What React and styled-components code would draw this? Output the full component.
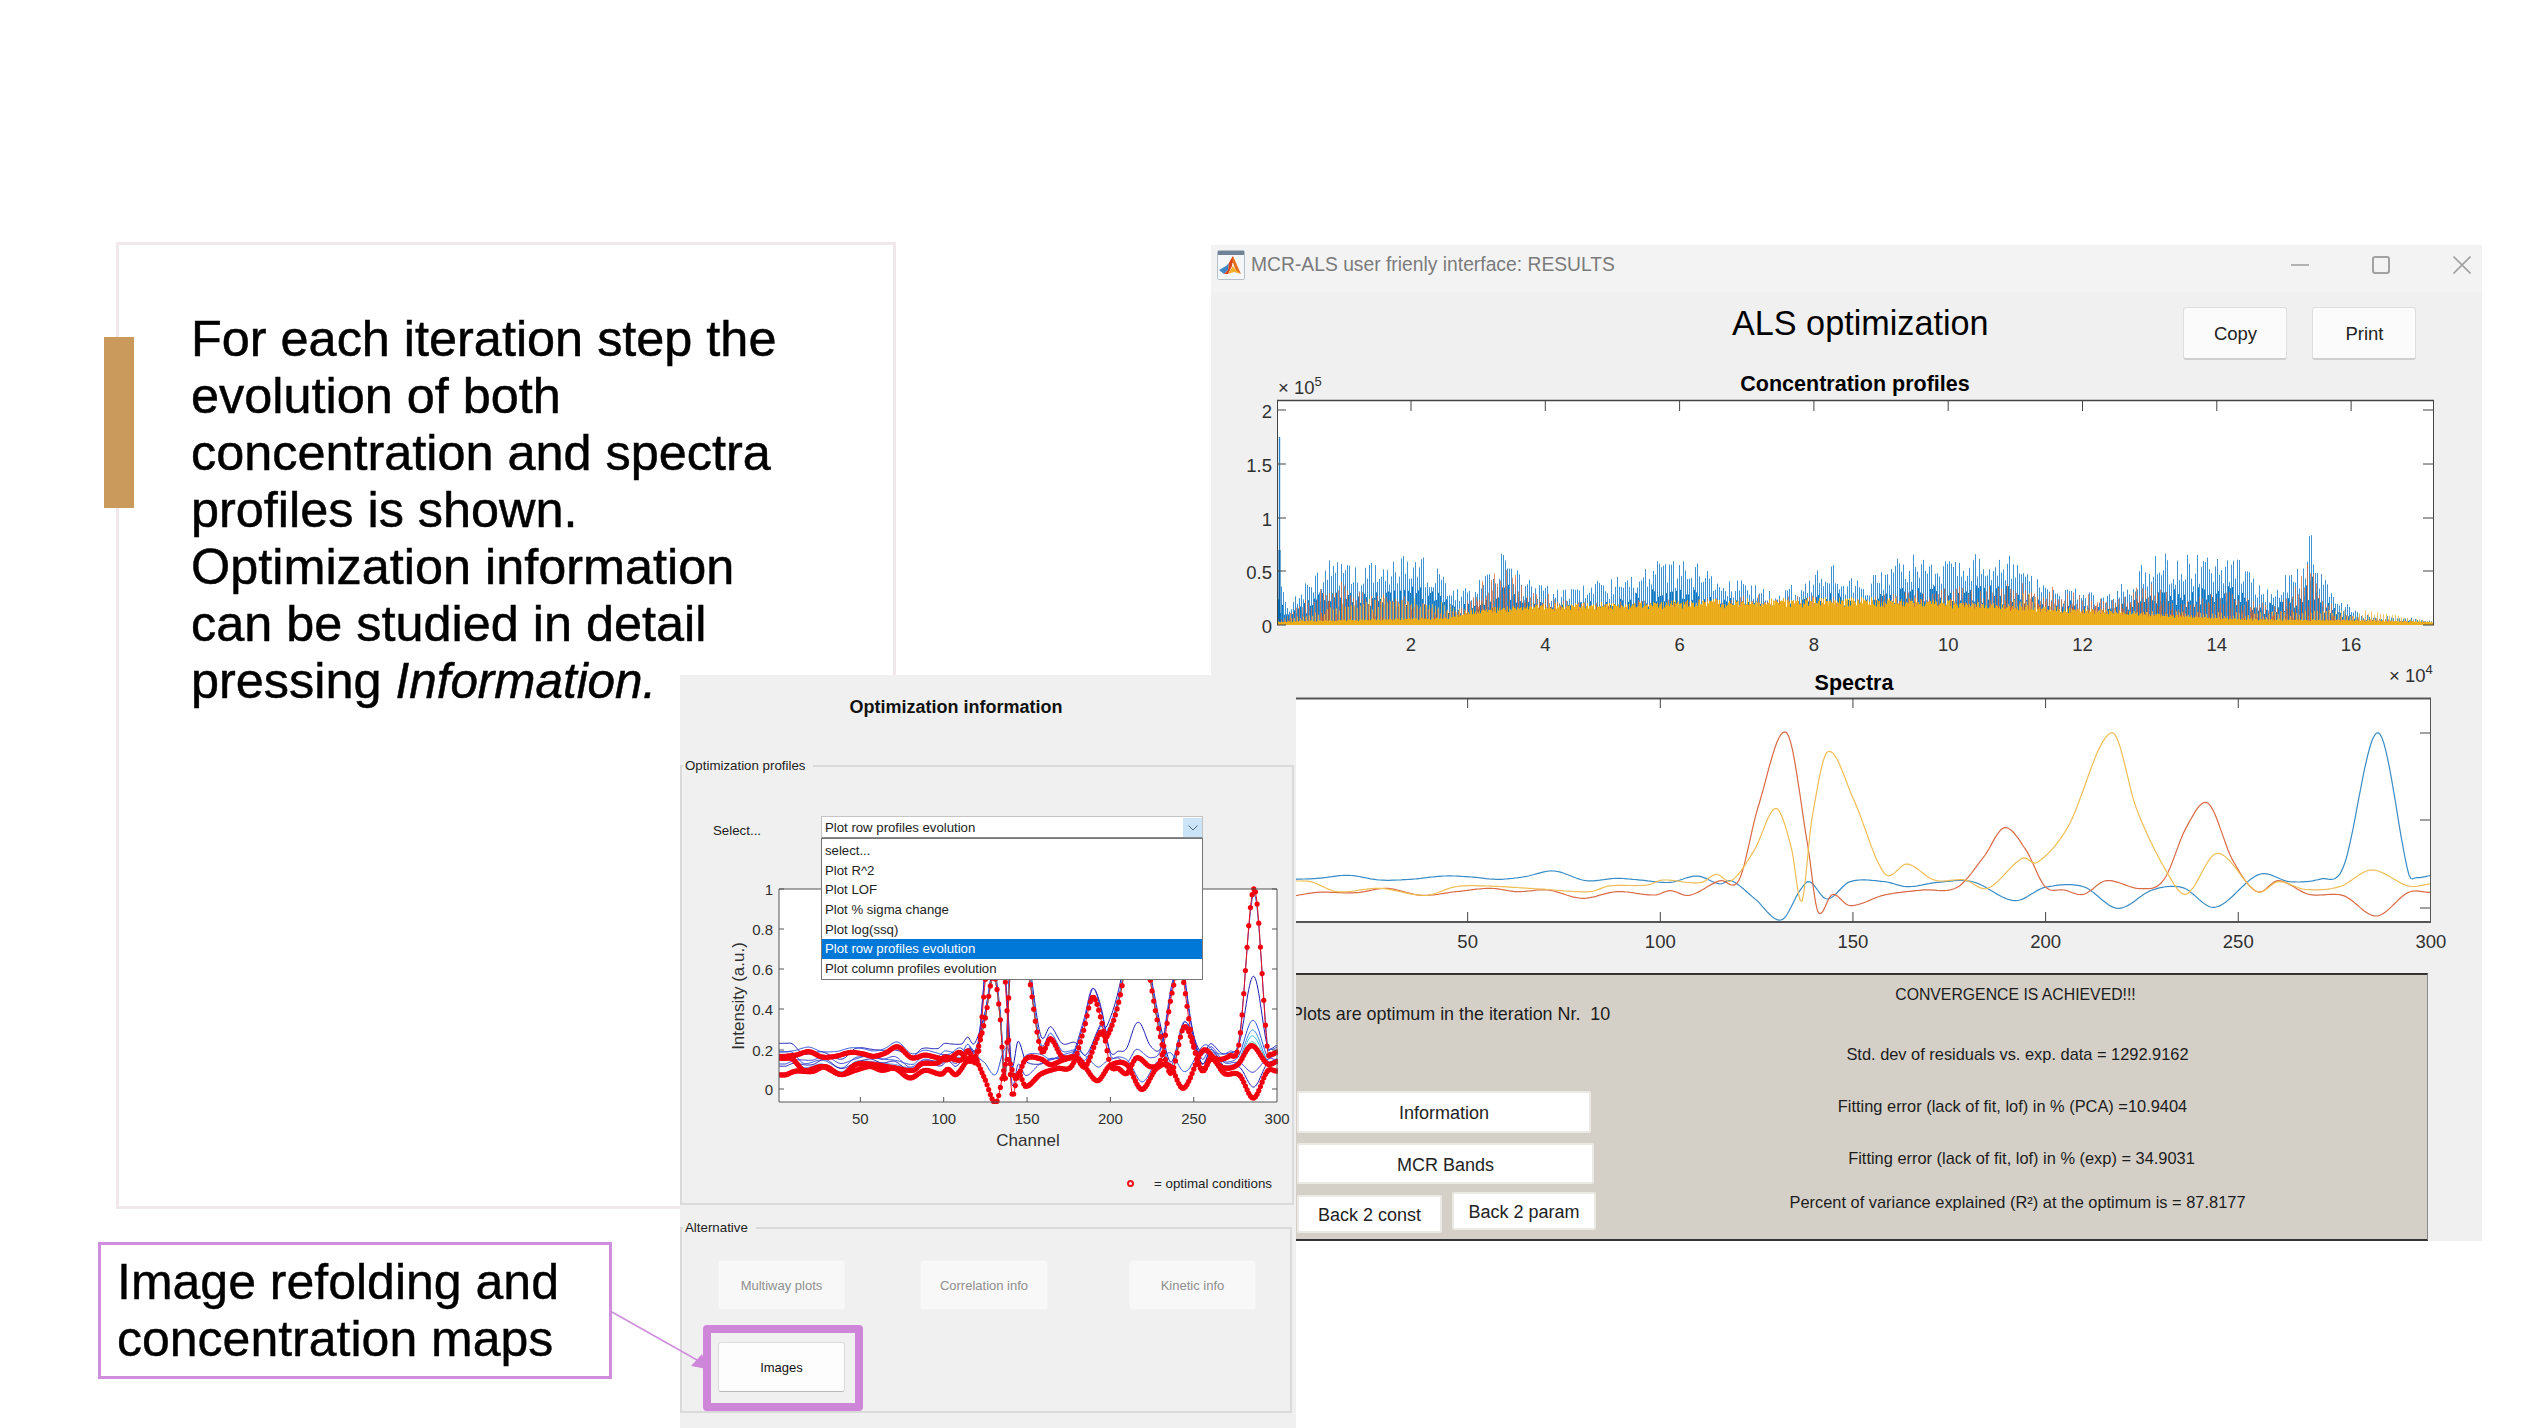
import React from "react";
import styled, { createGlobalStyle } from "styled-components";

const GlobalStyle = createGlobalStyle`
  html, body { margin: 0; padding: 0; background: #fff; }
  body { font-family: "Liberation Sans", Arial, sans-serif; color: #111; }
  * { box-sizing: border-box; }
`;

/* ---------- traced data, in pixels of the reference crop ---------- */

const BLUE = [[20,658],[50,655],[90,646],[130,660],[170,658],[215,648],[250,651],[285,658],[320,650],[358,633],[400,662],[440,655],[470,660],[510,667],[545,648],[575,672],[590,662],[620,715],[655,780],[680,690],[692,665],[715,717],[745,665],[790,665],[820,680],[860,667],[905,665],[960,722],[1000,682],[1050,680],[1095,745],[1140,690],[1180,683],[1222,742],[1280,643],[1320,665],[1360,657],[1390,620],[1435,218],[1475,640],[1485,653],[1503,647]];
const RED = [[20,707],[50,697],[100,698],[140,685],[185,706],[230,695],[275,685],[310,695],[350,690],[395,715],[440,695],[490,705],[510,692],[535,706],[575,662],[600,660],[625,440],[662,218],[690,560],[703,755],[722,703],[745,737],[790,705],[840,690],[885,682],[920,590],[947,503],[975,570],[1000,680],[1025,690],[1050,703],[1080,662],[1125,686],[1155,660],[1185,500],[1213,430],[1245,600],[1277,695],[1305,662],[1345,703],[1390,707],[1433,768],[1475,697],[1503,697]];
const YELLOW = [[20,663],[40,665],[75,695],[130,685],[190,706],[230,680],[270,678],[340,687],[405,695],[430,678],[480,675],[500,660],[550,668],[570,643],[590,662],[620,570],[648,445],[668,560],[682,725],[695,480],[716,275],[750,420],[790,640],[820,612],[855,660],[895,660],[925,685],[970,595],[990,607],[1030,500],[1087,218],[1120,450],[1160,640],[1185,702],[1225,580],[1277,695],[1305,665],[1340,688],[1385,680],[1427,630],[1475,678],[1503,672]];

const toSeries = (pts) =>
  pts.map(([zx, zy]) => [(1280 + zx / 1.307 - 1275) / 3.853, (744 - zy) / 525]);

const seriesBlue = toSeries(BLUE);
const seriesRed = toSeries(RED);
const seriesYellow = toSeries(YELLOW);

// cubic hermite through the traced points
const sample = (s, x) => {
  if (x <= s[0][0]) return s[0][1];
  if (x >= s[s.length - 1][0]) return s[s.length - 1][1];
  let i = 0;
  while (s[i + 1][0] < x) i++;
  const slope = (a, b) => (s[b][1] - s[a][1]) / (s[b][0] - s[a][0]);
  const m0 = i > 0 ? slope(i - 1, i + 1) : slope(i, i + 1);
  const m1 = i + 2 < s.length ? slope(i, i + 2) : slope(i, i + 1);
  const h = s[i + 1][0] - s[i][0];
  const t = (x - s[i][0]) / h;
  const t2 = t * t;
  const t3 = t2 * t;
  return (
    (2 * t3 - 3 * t2 + 1) * s[i][1] +
    (t3 - 2 * t2 + t) * h * m0 +
    (-2 * t3 + 3 * t2) * s[i + 1][1] +
    (t3 - t2) * h * m1
  );
};

const linePath = (fn, px, py, from = 1, to = 300, step = 0.5) => {
  let d = "";
  for (let c = from; c <= to; c += step) {
    d += `${d ? "L" : "M"}${px(c).toFixed(1)} ${py(fn(c)).toFixed(1)}`;
  }
  return d;
};

const ENV_BLUE = [[93,.5],[105,.18],[130,.42],[160,.67],[190,.56],[245,.67],[280,.62],[310,.34],[335,.42],[360,.55],[368,.87],[374,.58],[400,.42],[430,.34],[500,.45],[550,.62],[600,.6],[650,.42],[700,.32],[755,.6],[800,.42],[850,.68],[900,.65],[965,.72],[1000,.52],[1020,.36],[1048,.34],[1050,.58],[1053,.34],[1100,.3],[1150,.68],[1200,.65],[1245,.7],[1280,.34],[1330,.56],[1340,1.0],[1345,.56],[1370,.28],[1400,.1],[1460,.07],[1488,.05]];
const ENV_RED = [[93,.03],[160,.45],[200,.3],[250,.3],[300,.12],[365,.6],[400,.34],[450,.22],[600,.27],[650,.3],[700,.28],[800,.27],[870,.35],[1000,.4],[1050,.32],[1100,.26],[1150,.42],[1180,.2],[1220,.35],[1300,.2],[1340,.65],[1370,.1],[1488,.02]];
const ENV_YELLOW = [[93,.03],[150,.17],[250,.32],[310,.17],[330,.12],[400,.17],[550,.22],[800,.25],[950,.22],[1000,.35],[1020,.18],[1200,.12],[1340,.14],[1380,.15],[1430,.12],[1488,.03]];
const BASE = [[93,.035],[150,.045],[300,.07],[330,.14],[400,.18],[600,.22],[800,.24],[900,.22],[1000,.17],[1100,.13],[1180,.09],[1250,.06],[1400,.045],[1488,.03]];

const lerpEnv = (env, x) => {
  if (x <= env[0][0]) return env[0][1];
  for (let i = 0; i < env.length - 1; i++) {
    if (x <= env[i + 1][0]) {
      const t = (x - env[i][0]) / (env[i + 1][0] - env[i][0]);
      return env[i][1] + t * (env[i + 1][1] - env[i][1]);
    }
  }
  return env[env.length - 1][1];
};

const buildBars = () => {
  let seed = 20451;
  const rand = () => {
    seed = (seed * 16807) % 2147483647;
    return seed / 2147483647;
  };
  const top = (v) => (625 - v * 107.5).toFixed(1);
  let blue = "";
  let core = "";
  let red = "";
  let yellow = "";
  let mass = "";
  let massDeep = "";
  let ember = "";
  for (let x = 1277; x <= 2433; x++) {
    const zx = (x - 1200) * 1.206;
    const i = x - 1277;
    const px = x + 0.5;
    const env = lerpEnv(ENV_BLUE, zx);
    if (i % 2 === 0) blue += `M${px} 625V${top(env * (0.55 + 0.45 * rand()))}`;
    if (i % 2 === 1) core += `M${px} 625V${top(env * (0.25 + 0.3 * rand()))}`;
    if (i % 3 === 1) red += `M${px} 625V${top(lerpEnv(ENV_RED, zx) * (0.55 + 0.45 * rand()))}`;
    if (i % 3 === 2) yellow += `M${px} 625V${top(lerpEnv(ENV_YELLOW, zx) * (0.55 + 0.45 * rand()))}`;
    const base = lerpEnv(BASE, zx);
    if (i % 2 === 0) mass += `M${px} 625V${top(base * (0.8 + 0.3 * rand()))}`;
    else massDeep += `M${px} 625V${top(base * (0.7 + 0.3 * rand()))}`;
    // the orange runs stronger between 10 and 13 on the axis
    const emberWeight = Math.max(0.25, 1 - Math.abs(zx - 1060) / 200);
    if (rand() < emberWeight * 0.7) ember += `M${px} 625V${top(lerpEnv(ENV_RED, zx) * (0.15 + 0.5 * rand()))}`;
  }
  return { blue, core, red, yellow, mass, massDeep, ember };
};

/* ---------- page ---------- */

const Canvas = styled.div`
  position: relative;
  width: 2539px;
  height: 1428px;
  overflow: hidden;
  background: #fff;
`;

const SlideCard = styled.div`
  position: absolute;
  left: 116px;
  top: 242px;
  width: 780px;
  height: 967px;
  padding: 65px 0 0 72px;
  border: 3px solid #f0e8ea;
  background: #fff;
`;

const AccentBar = styled.div`
  position: absolute;
  left: 104px;
  top: 337px;
  width: 30px;
  height: 171px;
  background: #c99a5b;
`;

const SlideText = styled.p`
  margin: 0;
  max-width: 610px;
  font-size: 50.4px;
  line-height: 57px;
  color: #000;
  -webkit-text-stroke: 0.5px #000;

  em {
    font-size: 49.4px;
  }
`;

const Callout = styled.div`
  position: absolute;
  left: 98px;
  top: 1242px;
  width: 514px;
  height: 137px;
  padding: 9px 0 0 16px;
  border: 3px solid #cf8edb;
  background: #fff;
  font-size: 50px;
  line-height: 57px;
  color: #000;
  -webkit-text-stroke: 0.4px #000;
`;

const ArrowLayer = styled.svg`
  position: absolute;
  left: 600px;
  top: 1300px;
  z-index: 5;
`;

/* ---------- results window ---------- */

const ResultsWindow = styled.section`
  position: absolute;
  left: 1211px;
  top: 245px;
  width: 1271px;
  height: 996px;
  display: flex;
  flex-direction: column;
  background: #f0f0f0;
`;

const TitleBar = styled.div`
  display: flex;
  align-items: center;
  flex: none;
  height: 47px;
  padding: 0 11px 7px 6px;
  background: #f3f3f3;
`;

const WindowTitle = styled.span`
  margin-left: 6px;
  font-size: 19.3px;
  color: #7b7b7b;
`;

const WindowControls = styled.div`
  display: flex;
  gap: 63px;
  margin-left: auto;
`;

const HeaderRow = styled.div`
  display: flex;
  flex: none;
  height: 78px;
  padding: 11px 66px 0 521px;
`;

const MainTitle = styled.h1`
  margin: 0;
  font-size: 34.2px;
  font-weight: 400;
  line-height: 40px;
  color: #000;
`;

const HeaderButtons = styled.div`
  display: flex;
  gap: 25px;
  margin: 4px 0 0 auto;
`;

const SoftButton = styled.button`
  width: 104px;
  height: 53px;
  padding: 2px 0 0 1px;
  border: 1px solid #dedede;
  border-bottom: 2px solid #cfcfcf;
  border-radius: 3px;
  background: #fbfbfb;
  font-family: inherit;
  font-size: 18.5px;
  color: #222;
`;

const ChartSvg = styled.svg`
  display: block;
  flex: none;
`;

const TickText = styled.text`
  font-family: "Liberation Sans", Arial, sans-serif;
  font-size: ${(p) => p.$size || 18.5}px;
  fill: #303030;
`;

const ChartTitle = styled.text`
  font-family: "Liberation Sans", Arial, sans-serif;
  font-size: 21.5px;
  font-weight: 700;
  fill: #000;
`;

const StatusPanel = styled.div`
  display: grid;
  grid-template-columns: 318px 1fr;
  flex: none;
  height: 268px;
  margin: 13px 54px 0 79px;
  border-top: 2px solid #333;
  border-bottom: 2px solid #333;
  border-right: 1px solid #888;
  background: #d4d0c8;
`;

const PanelLeft = styled.div`
  display: flex;
  flex-direction: column;
  padding: 28px 0 0 1px;
`;

const IterationText = styled.div`
  font-size: 17.9px;
  line-height: 22px;
  white-space: nowrap;
  color: #1c1c1c;
`;

const ButtonStack = styled.div`
  display: flex;
  flex-direction: column;
  margin: 66px 0 0 6px;
`;

const PanelButton = styled.button`
  width: ${(p) => p.$w}px;
  height: ${(p) => p.$h}px;
  margin-top: ${(p) => p.$mt || 0}px;
  padding: 3px 0 0;
  border: 2px solid #ebe9e4;
  border-radius: 2px;
  background: #fff;
  font-family: inherit;
  font-size: 18px;
  color: #222;
`;

const BackRow = styled.div`
  display: flex;
  align-items: flex-start;
  gap: 10px;
`;

const PanelRight = styled.div`
  display: flex;
  flex-direction: column;
  padding-top: 10px;
`;

const ResultLine = styled.div`
  margin-top: ${(p) => p.$gap || 0}px;
  padding: 0 ${(p) => (p.$nudge < 0 ? -2 * p.$nudge : 0)}px 0 ${(p) => (p.$nudge > 0 ? 2 * p.$nudge : 0)}px;
  font-size: ${(p) => p.$size || 16.4}px;
  line-height: 20px;
  text-align: center;
  color: #1c1c1c;
`;

/* ---------- optimization information window ---------- */

const InfoWindow = styled.section`
  position: absolute;
  left: 680px;
  top: 675px;
  z-index: 3;
  width: 616px;
  height: 753px;
  padding-top: 20px;
  background: #f0f0f0;
`;

const InfoTitle = styled.h2`
  margin: 0;
  padding-right: 64px;
  font-size: 18px;
  font-weight: 700;
  line-height: 24px;
  text-align: center;
  color: #111;
`;

const GroupBox = styled.fieldset`
  min-width: 0;
  margin: ${(p) => p.$top}px ${(p) => p.$right}px 0 0;
  padding: 0;
  border: 2px solid #dadada;
`;

const GroupLegend = styled.legend`
  margin-left: 1px;
  padding: 0 8px 0 2px;
  font-size: 13.3px;
  line-height: 18px;
  color: #222;
`;

const SelectRow = styled.div`
  display: flex;
  align-items: center;
  height: 23px;
  margin-top: 41px;
  padding-left: 31px;
`;

const SelectLabel = styled.label`
  width: 108px;
  padding-top: 5px;
  font-size: 13.3px;
  color: #222;
`;

const Combo = styled.div`
  position: relative;
  display: flex;
  align-items: center;
  width: 382px;
  height: 23px;
  padding: 1px 0 0 3px;
  border: 1px solid #c4c4c4;
  border-bottom: 2px solid #8a8a8a;
  background: #fff;
  font-size: 13.2px;
  color: #222;
`;

const ComboArrow = styled.span`
  display: flex;
  align-items: center;
  justify-content: center;
  width: 19px;
  height: 100%;
  margin-left: auto;
  background: #cce4f7;
`;

const ComboList = styled.ul`
  position: absolute;
  left: -1px;
  right: -1px;
  top: 21px;
  z-index: 4;
  margin: 0;
  padding: 2px 0 0;
  border: 1px solid #767676;
  background: #fff;
  list-style: none;
`;

const ComboItem = styled.li`
  height: 19.7px;
  padding-left: 3px;
  font-size: 13.2px;
  line-height: 19.7px;
  color: ${(p) => (p.$active ? "#fff" : "#222")};
  background: ${(p) => (p.$active ? "#0078d7" : "transparent")};
`;

const ChartHolder = styled.div`
  height: 290px;
  margin: 36px 0 0 38px;
`;

const LegendRow = styled.div`
  display: flex;
  align-items: center;
  justify-content: flex-end;
  gap: 20px;
  height: 20px;
  margin: 8px 0 10px;
  padding-right: 20px;
  font-size: 13.3px;
  color: #222;
`;

const RingMark = styled.span`
  width: 7px;
  height: 7px;
  border: 2px solid #f0141e;
  border-radius: 50%;
`;

const AltGrid = styled.div`
  display: grid;
  grid-template-columns: 202px 209px auto;
  margin-top: 23px;
  padding-left: 36px;
`;

const AltButton = styled.button`
  width: ${(p) => p.$w || 127}px;
  height: 50px;
  padding: 0;
  border: 1px solid ${(p) => (p.$disabled ? "#f4f4f4" : "#dcdcdc")};
  border-bottom-color: ${(p) => (p.$disabled ? "#f4f4f4" : "#b9b9b9")};
  border-radius: 3px;
  background: ${(p) => (p.$disabled ? "#f8f8f8" : "#fdfdfd")};
  font-family: inherit;
  font-size: 13px;
  color: ${(p) => (p.$disabled ? "#8f8f8f" : "#111")};
`;

const HighlightBox = styled.div`
  width: 160px;
  height: 86px;
  margin: 15px 0 0 21px;
  padding: 9px 10px 11px 7px;
  border: 8px solid #ce86d8;
  border-radius: 4px;
`;

/* ---------- small drawings ---------- */

const MatlabIcon = () => (
  <svg width="28" height="30" viewBox="0 0 28 30">
    <rect x="0.5" y="0.5" width="27" height="29" rx="1" fill="#f4f6f8" stroke="#b5bfca" />
    <rect x="1" y="1" width="26" height="4" fill="#6f8296" />
    <path d="M2 20l7-4 3-3-1 7-4 4z" fill="#3f86c4" />
    <path d="M12 13l4-7 8 18-5-3-3-8z" fill="#e8701c" />
    <path d="M12 13l4-7-1 10-4 8-4 0 4-4z" fill="#d9431e" />
    <path d="M16 16l3 5 5 3-7-2-6 2z" fill="#f3b023" />
  </svg>
);

const WinIcon = ({ kind }) => (
  <svg width="18" height="18" viewBox="0 0 18 18" fill="none" stroke="#a2a2a2" strokeWidth="1.6">
    {kind === "min" && <path d="M0 9h18" />}
    {kind === "max" && <rect x="1" y="1" width="16" height="16" rx="2" strokeWidth="2" />}
    {kind === "close" && <path d="M0.5 0.5l17 17M17.5 0.5l-17 17" />}
  </svg>
);

const ConcentrationChart = () => {
  const bars = buildBars();
  const xTicks = [2, 4, 6, 8, 10, 12, 14, 16];
  const yTicks = [["2", 410], ["1.5", 464], ["1", 518], ["0.5", 571], ["0", 625]];
  return (
    <ChartSvg width="1271" height="290" viewBox="1211 370 1271 290">
      <rect x="1277" y="400" width="1157" height="225" fill="#fff" />
      <path d={bars.blue} stroke="#3f93d2" strokeWidth="1" fill="none" />
      <path d={bars.core} stroke="#0f78c0" strokeWidth="1" fill="none" />
      <path d="M1279.5 625V437" stroke="#2a83c6" strokeWidth="1.4" />
      <path d="M1279.5 625V550" stroke="#0063a8" strokeWidth="2" />
      <path d={bars.red} stroke="#e0703e" strokeOpacity="0.8" strokeWidth="1" fill="none" />
      <path d={bars.yellow} stroke="#efbe4a" strokeOpacity="0.85" strokeWidth="1" fill="none" />
      <path d={bars.ember} stroke="#d95319" strokeOpacity="0.6" strokeWidth="1" fill="none" />
      <path d={bars.massDeep} stroke="#e8a818" strokeWidth="1" fill="none" />
      <path d={bars.mass} stroke="#edb120" strokeWidth="1" fill="none" />
      <path d="M1277 400.5H2434" stroke="#444" strokeWidth="1.6" />
      <path d="M1277.5 400V625M2433.5 400V625" stroke="#444" strokeWidth="1" />
      {xTicks.map((t, i) => {
        const x = 1411 + i * 134.3;
        return (
          <g key={t}>
            <path d={`M${x} 400v11`} stroke="#444" />
            <TickText x={x} y={651} textAnchor="middle">{t}</TickText>
          </g>
        );
      })}
      {yTicks.map(([label, y]) => (
        <g key={label}>
          <path d={`M1277 ${y}h9M2434 ${y}h-11`} stroke="#444" />
          <TickText x={1272} y={y + 8} textAnchor="end">{label}</TickText>
        </g>
      ))}
      <TickText x={1278} y={394}>
        × 10
        <tspan fontSize="13" dy="-8">5</tspan>
      </TickText>
      <ChartTitle x={1855} y={391} textAnchor="middle">Concentration profiles</ChartTitle>
    </ChartSvg>
  );
};

const SpectraChart = () => {
  const px = (c) => 1275 + c * 3.853;
  const py = (v) => 908 - v * 175;
  const curves = [
    [seriesBlue, "#3a8cc6"],
    [seriesRed, "#d96a45"],
    [seriesYellow, "#efbd54"],
  ];
  return (
    <ChartSvg width="1271" height="300" viewBox="1211 660 1271 300">
      <rect x="1275" y="698" width="1155" height="224" fill="#fff" />
      {curves.map(([s, color]) => (
        <path key={color} d={linePath((c) => sample(s, c), px, py, 5.3, 300)} stroke={color} strokeWidth="1.2" fill="none" />
      ))}
      <path d="M1275 698.5H2431M1275 922H2431" stroke="#555" strokeWidth="1.8" />
      <path d="M2430.5 698V922" stroke="#555" />
      {[50, 100, 150, 200, 250, 300].map((t) => (
        <g key={t}>
          {t < 300 && <path d={`M${px(t)} 698v10M${px(t)} 922v-10`} stroke="#444" />}
          <TickText x={px(t)} y={948} textAnchor="middle">{t}</TickText>
        </g>
      ))}
      {[733, 820, 908].map((y) => (
        <path key={y} d={`M2430 ${y}h-10`} stroke="#444" />
      ))}
      <ChartTitle x={1854} y={690} textAnchor="middle">Spectra</ChartTitle>
      <TickText x={2389} y={682}>
        × 10
        <tspan fontSize="13" dy="-8">4</tspan>
      </TickText>
    </ChartSvg>
  );
};

const OptimizationChart = () => {
  const px = (c) => 777 + c * 1.667;
  const py = (v) => 1089 - v * 200;
  const b = (c) => sample(seriesBlue, c);
  const r = (c) => sample(seriesRed, c);
  const y = (c) => sample(seriesYellow, c);
  const main = [b, r, y];
  const thin = [
    [(c) => y(c) + 0.33 * b(c) + 0.02, "#1a1ab4"],
    [(c) => y(c) + 0.12 * b(c) + 0.03 * r(c) + 0.01, "#2b4fd8"],
    [(c) => y(c) + 0.08 * b(c), "#3f8fe8"],
    [(c) => y(c) + 0.05 * b(c), "#38c8e8"],
    [(c) => y(c) + 0.02 * b(c), "#30d0a0"],
    [(c) => 0.98 * r(c) + 0.16 * y(c) + 0.02, "#1a1ab4"],
    [(c) => 0.96 * b(c) + 0.12 * r(c) + 0.02, "#2b4fd8"],
    [(c) => r(c) + 0.09 * b(c) + 0.04, "#3a3ad0"],
  ];
  const channels = Array.from({ length: 300 }, (_, i) => i + 1);
  return (
    <svg width="570" height="290" viewBox="720 875 570 290">
      <defs>
        <clipPath id="optAxes">
          <rect x="779" y="885" width="499" height="219" />
        </clipPath>
      </defs>
      <rect x="779" y="889" width="498" height="213" fill="#fff" />
      <g clipPath="url(#optAxes)">
        {thin.map(([fn, color], i) => (
          <path key={i} d={linePath(fn, px, py)} stroke={color} strokeWidth="1" fill="none" />
        ))}
        {main.map((fn, i) => (
          <g key={i}>
            <path d={linePath(fn, px, py)} stroke="#ef1020" strokeWidth="1" fill="none" />
            {channels.map((c) => (
              <circle key={c} cx={px(c)} cy={py(fn(c))} r="2.6" fill="#f3000f" />
            ))}
          </g>
        ))}
      </g>
      <path d="M779 889H1277V1102H779Z" stroke="#555" fill="none" />
      {[50, 100, 150, 200, 250, 300].map((t) => (
        <g key={t}>
          {t < 300 && <path d={`M${px(t)} 1102v-5M${px(t)} 889v5`} stroke="#555" />}
          <TickText $size={15} x={px(t)} y={1124} textAnchor="middle">{t}</TickText>
        </g>
      ))}
      {[["1", 889], ["0.8", 929], ["0.6", 969], ["0.4", 1009], ["0.2", 1050], ["0", 1089]].map(([label, v]) => (
        <g key={label}>
          <path d={`M779 ${v}h5M1277 ${v}h-5`} stroke="#555" />
          <TickText $size={15} x={773} y={v + 6} textAnchor="end">{label}</TickText>
        </g>
      ))}
      <TickText $size={17} x={1028} y={1146} textAnchor="middle">Channel</TickText>
      <TickText $size={17} x={0} y={0} textAnchor="middle" transform="translate(744 996) rotate(-90)">
        Intensity (a.u.)
      </TickText>
    </svg>
  );
};

const MENU = [
  "select...",
  "Plot R^2",
  "Plot LOF",
  "Plot % sigma change",
  "Plot log(ssq)",
  "Plot row profiles evolution",
  "Plot column profiles evolution",
];

const App = () => (
  <Canvas>
    <GlobalStyle />

    <SlideCard>
      <SlideText>
        For each iteration step the evolution of both concentration and spectra
        profiles is shown. Optimization information can be studied in detail
        pressing <em>Information.</em>
      </SlideText>
    </SlideCard>
    <AccentBar />

    <ResultsWindow>
      <TitleBar>
        <MatlabIcon />
        <WindowTitle>MCR-ALS user frienly interface: RESULTS</WindowTitle>
        <WindowControls>
          <WinIcon kind="min" />
          <WinIcon kind="max" />
          <WinIcon kind="close" />
        </WindowControls>
      </TitleBar>
      <HeaderRow>
        <MainTitle>ALS optimization</MainTitle>
        <HeaderButtons>
          <SoftButton>Copy</SoftButton>
          <SoftButton>Print</SoftButton>
        </HeaderButtons>
      </HeaderRow>
      <ConcentrationChart />
      <SpectraChart />
      <StatusPanel>
        <PanelLeft>
          <IterationText>Plots are optimum in the iteration Nr.&nbsp; 10</IterationText>
          <ButtonStack>
            <PanelButton $w={294} $h={42}>Information</PanelButton>
            <PanelButton $w={297} $h={41} $mt={10}>MCR Bands</PanelButton>
            <BackRow>
              <PanelButton $w={145} $h={38} $mt={11}>Back 2 const</PanelButton>
              <PanelButton $w={144} $h={38} $mt={8}>Back 2 param</PanelButton>
            </BackRow>
          </ButtonStack>
        </PanelLeft>
        <PanelRight>
          <ResultLine $nudge={-2} $size={15.8}>CONVERGENCE IS ACHIEVED!!!</ResultLine>
          <ResultLine $gap={39}>Std. dev of residuals vs. exp. data = 1292.9162</ResultLine>
          <ResultLine $gap={32} $nudge={-5}>Fitting error (lack of fit, lof) in % (PCA) =10.9404</ResultLine>
          <ResultLine $gap={32} $nudge={4}>Fitting error (lack of fit, lof) in % (exp) = 34.9031</ResultLine>
          <ResultLine $gap={24}>Percent of variance explained (R²) at the optimum is = 87.8177</ResultLine>
        </PanelRight>
      </StatusPanel>
    </ResultsWindow>

    <InfoWindow>
      <InfoTitle>Optimization information</InfoTitle>
      <GroupBox $top={38} $right={2}>
        <GroupLegend>Optimization profiles</GroupLegend>
        <SelectRow>
          <SelectLabel>Select...</SelectLabel>
          <Combo>
            Plot row profiles evolution
            <ComboArrow>
              <svg width="10" height="6" viewBox="0 0 10 6" fill="none" stroke="#4a6a86" strokeWidth="1">
                <path d="M0.5 0.5L5 5l4.5-4.5" />
              </svg>
            </ComboArrow>
            <ComboList>
              {MENU.map((item, i) => (
                <ComboItem key={item} $active={i === 5}>{item}</ComboItem>
              ))}
            </ComboList>
          </Combo>
        </SelectRow>
        <ChartHolder>
          <OptimizationChart />
        </ChartHolder>
        <LegendRow>
          <RingMark />
          <span>= optimal conditions</span>
        </LegendRow>
      </GroupBox>
      <GroupBox $top={14} $right={4}>
        <GroupLegend>Alternative</GroupLegend>
        <AltGrid>
          <AltButton $disabled>Multiway plots</AltButton>
          <AltButton $disabled $w={128}>Correlation info</AltButton>
          <AltButton $disabled>Kinetic info</AltButton>
        </AltGrid>
        <HighlightBox>
          <AltButton>Images</AltButton>
        </HighlightBox>
      </GroupBox>
    </InfoWindow>

    <Callout>
      Image refolding and
      <br />
      concentration maps
    </Callout>
    <ArrowLayer width="120" height="80" viewBox="600 1300 120 80">
      <path d="M612 1312L697 1360" stroke="#cf8edb" strokeWidth="1.5" fill="none" />
      <path d="M691 1366L702 1354L707 1369Z" fill="#ce86d8" />
    </ArrowLayer>
  </Canvas>
);

export default App;
